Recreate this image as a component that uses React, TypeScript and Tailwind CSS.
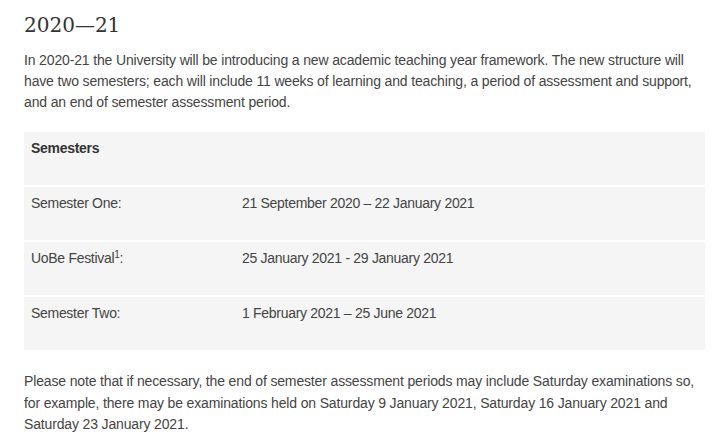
export default function App() {
  const rows = [
    { label: "Semester One:", sup: false, dates: "21 September 2020 – 22 January 2021" },
    { label: "UoBe Festival", sup: true, dates: "25 January 2021 - 29 January 2021" },
    { label: "Semester Two:", sup: false, dates: "1 February 2021 – 25 June 2021" },
  ];

  return (
    <div className="min-h-screen bg-white px-6 pt-[13px] font-['Liberation_Sans',Arial,sans-serif] text-[14px] leading-[21px] text-[#444]">
      <h2 className="font-['DejaVu_Serif',serif] text-[20px] leading-[24px] text-[#333]">2020—21</h2>

      <p className="mt-[13px] w-[690px] tracking-[-0.15px]">
        In 2020-21 the University will be introducing a new academic teaching year framework. The new structure will
        <br />
        have two semesters; each will include 11 weeks of learning and teaching, a period of assessment and support,
        <br />
        and an end of semester assessment period.
      </p>

      <div className="mt-[19px] flex w-[681px] flex-col gap-[2px] tracking-[-0.3px]">
        <div className="h-[53px] bg-[#f5f5f5] px-[7px] pt-[6px] font-bold text-[#333]">Semesters</div>
        {rows.map((r) => (
          <div key={r.label} className="flex h-[53px] bg-[#f5f5f5] pt-[6px]">
            <div className="w-[218px] pl-[7px]">
              {r.label}
              {r.sup && (
                <>
                  <sup className="text-[10px]">1</sup>:
                </>
              )}
            </div>
            <div>{r.dates}</div>
          </div>
        ))}
      </div>

      <p className="mt-[21px] w-[690px] leading-[21.5px] tracking-[-0.15px]">
        Please note that if necessary, the end of semester assessment periods may include Saturday examinations so,
        <br />
        for example, there may be examinations held on Saturday 9 January 2021, Saturday 16 January 2021 and
        <br />
        Saturday 23 January 2021.
      </p>
    </div>
  );
}
